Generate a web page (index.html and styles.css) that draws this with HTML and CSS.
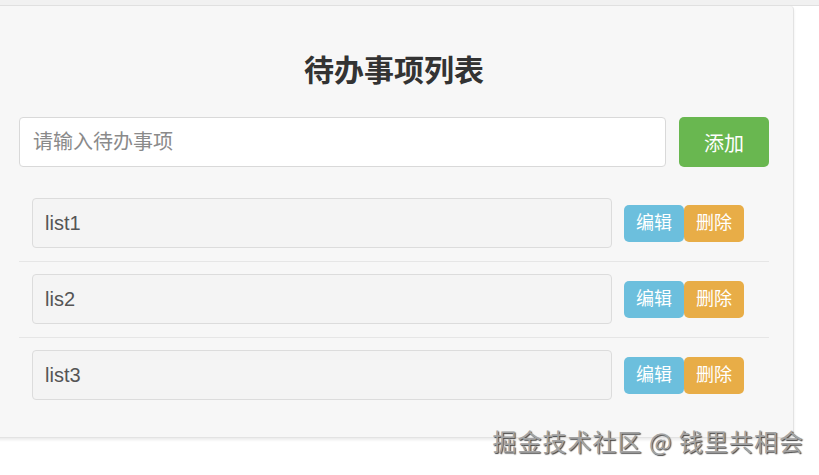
FILE: index.html
```html
<!DOCTYPE html>
<html lang="zh-CN">
<head>
<meta charset="utf-8">
<title>待办事项列表</title>
<link rel="stylesheet" href="styles.css">
</head>
<body>
<div class="topbar"></div>
<div class="well">
  <h2 class="title">待办事项列表</h2>
  <div class="add-row">
    <input class="add-input" type="text" placeholder="请输入待办事项">
    <button class="btn btn-add" type="button">添加</button>
  </div>
  <ul class="todo-list">
    <li class="todo-item">
      <div class="todo-text">list1</div>
      <div class="todo-actions">
        <button class="btn btn-edit" type="button">编辑</button><button class="btn btn-del" type="button">删除</button>
      </div>
    </li>
    <li class="todo-item">
      <div class="todo-text">lis2</div>
      <div class="todo-actions">
        <button class="btn btn-edit" type="button">编辑</button><button class="btn btn-del" type="button">删除</button>
      </div>
    </li>
    <li class="todo-item">
      <div class="todo-text">list3</div>
      <div class="todo-actions">
        <button class="btn btn-edit" type="button">编辑</button><button class="btn btn-del" type="button">删除</button>
      </div>
    </li>
  </ul>
</div>
<div class="watermark">掘金技术社区 @ 钱里共相会</div>
</body>
</html>
```
FILE: styles.css
```css
* { box-sizing: border-box; }

html, body {
  margin: 0;
  padding: 0;
  background: #ffffff;
  font-family: "Liberation Sans", "Noto Sans CJK SC", sans-serif;
  color: #333;
  overflow: hidden;
}

body {
  position: relative;
  height: 475px;
}

.topbar {
  height: 6px;
  background: #f1f1f1;
  border-bottom: 1px solid #e0e0e0;
}

.well {
  margin-left: -6px;
  width: 800px;
  background: #f7f7f7;
  border: 1px solid #e3e3e3;
  border-top: none;
  border-radius: 0 4px 4px 4px;
  padding: 18px 24px 24px 24px;
  box-shadow: 0 2px 3px rgba(0, 0, 0, 0.08);
}

.title {
  margin: 30px 0 30px;
  font-size: 30px;
  line-height: 33px;
  font-weight: bold;
  text-align: center;
  color: #333;
}

.add-row {
  display: flex;
  gap: 13px;
  height: 50px;
}

.add-input {
  flex: 1;
  height: 50px;
  margin: 0;
  padding: 0 13px;
  border: 1px solid #d9d9d9;
  border-radius: 4px;
  background: #fff;
  font-family: "Liberation Sans", "Noto Sans CJK SC", sans-serif;
  font-size: 20px;
  color: #555;
  outline: none;
}

.add-input::placeholder {
  color: #8a8a8a;
}

.btn {
  margin: 0;
  border: none;
  color: #fff;
  font-family: "Liberation Sans", "Noto Sans CJK SC", sans-serif;
  cursor: pointer;
  padding: 0;
}

.btn-add {
  width: 90px;
  height: 50px;
  border-radius: 5px;
  background: #69b750;
  font-size: 20px;
}

.todo-list {
  list-style: none;
  margin: 19px 0 0;
  padding: 0;
}

.todo-item {
  display: flex;
  align-items: center;
  gap: 12px;
  padding: 12px 25px 13px 13px;
  border-bottom: 1px solid #e6e6e6;
}

.todo-item:last-child {
  border-bottom: none;
}

.todo-text {
  flex: 1;
  height: 50px;
  line-height: 48px;
  padding: 0 12px;
  border: 1px solid #dcdcdc;
  border-radius: 4px;
  background: #f4f4f4;
  font-size: 20px;
  color: #555;
}

.todo-actions {
  display: flex;
  width: 120px;
}

.btn-edit,
.btn-del {
  width: 60px;
  height: 37px;
  border-radius: 5px;
  font-size: 18px;
  line-height: 37px;
}

.btn-edit {
  background: #6cbfdd;
}

.btn-del {
  background: #e8ad47;
}

.watermark {
  position: absolute;
  right: 15px;
  top: 425px;
  font-family: "Noto Sans CJK SC", sans-serif;
  font-size: 24px;
  letter-spacing: 1px;
  line-height: 32px;
  color: #a3a3a3;
  text-shadow: 1px 1px 1px #444;
  white-space: nowrap;
}
```
